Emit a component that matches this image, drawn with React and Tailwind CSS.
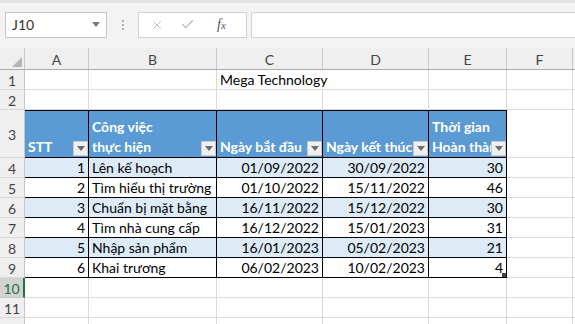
import { X, Check } from "lucide-react";

const font = { fontFamily: "Lato, 'Liberation Sans', sans-serif" };

const colW = ["w-[64px]", "w-[128px]", "w-[106px]", "w-[106px]", "w-[78px]", "w-[66px]"];
const letters = ["A", "B", "C", "D", "E", "F"];

const rows = [
  [1, "Lên kế hoạch", "01/09/2022", "30/09/2022", 30],
  [2, "Tìm hiểu thị trường", "01/10/2022", "15/11/2022", 46],
  [3, "Chuẩn bị mặt bằng", "16/11/2022", "15/12/2022", 30],
  [4, "Tìm nhà cung cấp", "16/12/2022", "15/01/2023", 31],
  [5, "Nhập sản phẩm", "16/01/2023", "05/02/2023", 21],
  [6, "Khai trương", "06/02/2023", "10/02/2023", 4],
];

function RowHead({ n, active }) {
  return (
    <div
      className={
        active
          ? "w-[25px] shrink-0 flex items-center justify-center pt-[3px] bg-[#d2d2d2] text-[#217346] border-r-2 border-r-[#217346] border-b border-b-[#c8c8c8]"
          : "w-[25px] shrink-0 flex items-center justify-center pt-[3px] bg-[#efefef] text-[#444] border-r border-r-[#c8c8c8] border-b border-b-[#d8d8d8]"
      }
    >
      {n}
    </div>
  );
}

function Blank({ i }) {
  return <div className={`${colW[i]} shrink-0 border-r border-b border-[#dadada]`} />;
}

function Filter() {
  return (
    <div className="absolute right-0 bottom-[1px] w-[15px] h-[15px] bg-[#f0f0f0] border border-[#c9c9c9] flex items-center justify-center">
      <svg width="8" height="5" viewBox="0 0 8 5">
        <path d="M0 0 L8 0 L4 5 Z" fill="#6b6b6b" />
      </svg>
    </div>
  );
}

function EmptyRow({ n, active }) {
  return (
    <div className="flex h-[20px]">
      <RowHead n={n} active={active} />
      {colW.map((_, i) => (
        <Blank key={i} i={i} />
      ))}
      <div className="flex-1 border-b border-[#dadada]" />
    </div>
  );
}

export default function App() {
  return (
    <div className="w-[575px] h-[324px] overflow-hidden bg-white text-[14px] text-black leading-none" style={font}>
      {/* formula bar */}
      <div className="h-[48px] bg-[#f3f3f3] border-t-[3px] border-t-[#e4e4e4] flex items-center pb-[2px]">
        <div className="ml-[5px] w-[102px] h-[26px] bg-white border border-[#c6c6c6] flex items-center justify-between pl-[6px] pr-[6px] text-[#333]">
          <span>J10</span>
          <svg width="8" height="5" viewBox="0 0 8 5">
            <path d="M0 0 L8 0 L4 5 Z" fill="#777" />
          </svg>
        </div>
        <div className="w-[31px] flex flex-col items-center gap-[2px]">
          <span className="w-[2px] h-[2px] bg-[#b0b0b0]" />
          <span className="w-[2px] h-[2px] bg-[#b0b0b0]" />
          <span className="w-[2px] h-[2px] bg-[#b0b0b0]" />
        </div>
        <div className="w-[109px] h-[26px] bg-white border border-[#d2d2d2] flex items-center pl-[11px] gap-[16px] text-[#b8b8b8]">
          <X size={14} strokeWidth={1.5} />
          <Check size={15} strokeWidth={2} />
          <span className="ml-[6px] italic text-[#555] text-[14px]" style={{ fontFamily: "'Liberation Serif', serif" }}>
            f<span className="text-[11px]">x</span>
          </span>
        </div>
        <div className="ml-[4px] flex-1 h-[26px] bg-white border border-[#d2d2d2] border-r-0" />
      </div>

      {/* column headers */}
      <div className="flex h-[22px] bg-[#efefef] border-b border-[#ababab]">
        <div className="w-[25px] shrink-0 border-r border-[#c8c8c8] flex items-end justify-end p-[2px]">
          <svg width="10" height="10" viewBox="0 0 10 10">
            <path d="M10 0 L10 10 L0 10 Z" fill="#b5b5b5" />
          </svg>
        </div>
        {letters.map((l, i) => (
          <div key={l} className={`${colW[i]} shrink-0 border-r border-[#c8c8c8] flex items-center justify-center pt-[2px] text-[#444]`}>
            {l}
          </div>
        ))}
        <div className="flex-1" />
      </div>

      {/* row 1 */}
      <div className="flex h-[20px]">
        <RowHead n={1} />
        <Blank i={0} />
        <Blank i={1} />
        <div className="w-[106px] shrink-0 border-b border-[#dadada] flex items-end pl-[3px] pb-[2px] whitespace-nowrap overflow-visible relative z-10">
          Mega Technology
        </div>
        <Blank i={3} />
        <Blank i={4} />
        <Blank i={5} />
        <div className="flex-1 border-b border-[#dadada]" />
      </div>

      <EmptyRow n={2} />

      {/* row 3: table header */}
      <div className="flex h-[48px]">
        <RowHead n={3} />
        <div className="w-[64px] shrink-0 bg-[#5b9bd5] border-t border-b border-r border-black relative text-white font-bold flex items-end pl-[3px] pb-[3px]">
          STT
          <Filter />
        </div>
        <div className="w-[128px] shrink-0 bg-[#5b9bd5] border-t border-b border-r border-black relative text-white font-bold flex flex-col justify-end pl-[3px] pb-[3px] gap-[6px]">
          <span>Công việc</span>
          <span>thực hiện</span>
          <Filter />
        </div>
        <div className="w-[106px] shrink-0 bg-[#5b9bd5] border-t border-b border-r border-black relative text-white font-bold flex items-end pl-[3px] pb-[3px] whitespace-nowrap overflow-hidden">
          Ngày bắt đầu
          <Filter />
        </div>
        <div className="w-[106px] shrink-0 bg-[#5b9bd5] border-t border-b border-r border-black relative text-white font-bold flex items-end pl-[3px] pb-[3px] whitespace-nowrap overflow-hidden">
          Ngày kết thúc
          <Filter />
        </div>
        <div className="w-[78px] shrink-0 bg-[#5b9bd5] border-t border-b border-r border-black relative text-white font-bold flex flex-col justify-end pl-[3px] pb-[3px] gap-[6px] whitespace-nowrap overflow-hidden">
          <span>Thời gian</span>
          <span>Hoàn thàn</span>
          <Filter />
        </div>
        <Blank i={5} />
        <div className="flex-1 border-b border-[#dadada]" />
      </div>

      {/* table rows */}
      {rows.map((r, idx) => {
        const band = idx % 2 === 0 ? "bg-[#ddebf7]" : "bg-white";
        const cell = `shrink-0 border-b border-r border-black flex items-end pb-[2px] px-[3px] whitespace-nowrap ${band}`;
        return (
          <div key={idx} className="flex h-[20px]">
            <RowHead n={idx + 4} />
            <div className={`w-[64px] justify-end ${cell}`}>{r[0]}</div>
            <div className={`w-[128px] ${cell}`}>{r[1]}</div>
            <div className={`w-[106px] justify-end ${cell}`}>{r[2]}</div>
            <div className={`w-[106px] justify-end ${cell}`}>{r[3]}</div>
            <div className={`w-[78px] justify-end relative ${cell}`}>
              {r[4]}
              {idx === rows.length - 1 && (
                <span className="absolute right-0 bottom-0 w-[4px] h-[4px] bg-[#444]" />
              )}
            </div>
            <Blank i={5} />
            <div className="flex-1 border-b border-[#dadada]" />
          </div>
        );
      })}

      <EmptyRow n={10} active />
      <EmptyRow n={11} />
      <EmptyRow n="" />
    </div>
  );
}
